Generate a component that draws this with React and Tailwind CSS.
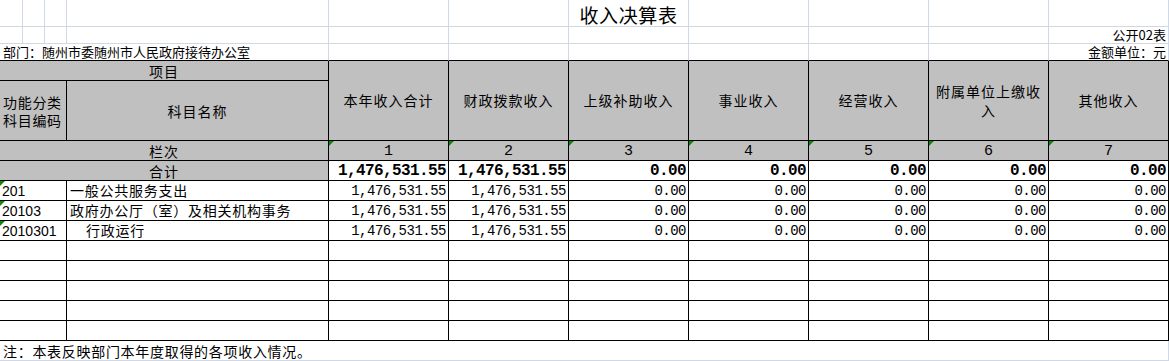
import React from 'react';

const GRID = 'border-[#d0d7e5]';
const CJK = "font-['Noto_Sans_CJK_SC',sans-serif]";
const MIXED = "font-['Liberation_Sans','Noto_Sans_CJK_SC',sans-serif]";
const MONO = "font-['Liberation_Mono',monospace]";

const HEADERS = ['本年收入合计', '财政拨款收入', '上级补助收入', '事业收入', '经营收入', '附属单位上缴收入', '其他收入'];

const TOTAL = ['1,476,531.55', '1,476,531.55', '0.00', '0.00', '0.00', '0.00', '0.00'];

const ROWS = [
  { code: '201', name: '一般公共服务支出', indent: false },
  { code: '20103', name: '政府办公厅（室）及相关机构事务', indent: false },
  { code: '2010301', name: '行政运行', indent: true },
];

// excel-style "number stored as text" marker
function Flag() {
  return (
    <span className="absolute left-0 top-0 h-0 w-0 border-t-[5px] border-r-[5px] border-t-[#0a8a0a] border-r-transparent" />
  );
}

function Cell({ className = '', children }) {
  return (
    <div className={`relative flex items-center border-r border-b ${className}`}>
      {children}
    </div>
  );
}

export default function App() {
  return (
    <div className="w-[1169px] h-[361px] overflow-hidden bg-white text-black">
      <div className="grid grid-cols-[23px_22px_22px_262px_repeat(7,120px)] grid-rows-[27px_17px_17px_20px_60px_20px_20px_20px_20px_20px_20px_20px_20px_20px_20px_20px]">
        {/* row 1: title */}
        <Cell className={GRID} />
        <Cell className={GRID} />
        <Cell className={GRID} />
        <Cell className={GRID} />
        <Cell className={GRID} />
        <Cell className={GRID} />
        <Cell className={`${GRID} justify-center pt-[3px] ${CJK} text-[19px] leading-[22px] tracking-[0.6px]`}>
          收入决算表
        </Cell>
        <Cell className={GRID} />
        <Cell className={GRID} />
        <Cell className={GRID} />
        <Cell className={GRID} />

        {/* row 2 */}
        <Cell className={GRID} />
        <Cell className={GRID} />
        <Cell className={GRID} />
        <Cell className={GRID} />
        <Cell className={GRID} />
        <Cell className={GRID} />
        <Cell className={GRID} />
        <Cell className={GRID} />
        <Cell className={GRID} />
        <Cell className={GRID} />
        <Cell className={`${GRID} justify-end pr-[2px] ${CJK} text-[13px] leading-[14px] whitespace-nowrap`}>公开02表</Cell>

        {/* row 3 */}
        <Cell className={`col-span-4 border-r-[#d0d7e5] border-b-black pl-[3px] ${CJK} text-[13px] leading-[14px] whitespace-nowrap`}>
          部门：随州市委随州市人民政府接待办公室
        </Cell>
        {[0, 1, 2, 3, 4, 5].map(i => (
          <Cell key={i} className="border-r-[#d0d7e5] border-b-black" />
        ))}
        <Cell className={`border-r-[#d0d7e5] border-b-black justify-end pr-[2px] ${CJK} text-[13px] leading-[14px] whitespace-nowrap`}>
          金额单位：元
        </Cell>

        {/* header */}
        <Cell className={`col-span-4 border-black bg-[#c0c0c0] justify-center ${CJK} text-[14px] leading-[18px] tracking-[1px]`}>
          项目
        </Cell>
        {HEADERS.map(h => (
          <Cell key={h} className={`row-span-2 border-black bg-[#c0c0c0] justify-center text-center px-[6px] ${CJK} text-[14px] leading-[19px] tracking-[1px]`}>
            {h}
          </Cell>
        ))}
        <Cell className={`col-span-3 border-black bg-[#c0c0c0] pl-[3px] ${CJK} text-[14px] leading-[18px] tracking-[0.7px]`}>
          功能分类<br />科目编码
        </Cell>
        <Cell className={`border-black bg-[#c0c0c0] justify-center ${CJK} text-[14px] leading-[18px] tracking-[1px]`}>
          科目名称
        </Cell>

        {/* 栏次 */}
        <Cell className={`col-span-4 border-black bg-[#c0c0c0] justify-center ${CJK} text-[14px] leading-[18px] tracking-[1px]`}>
          栏次
        </Cell>
        {HEADERS.map((h, i) => (
          <Cell key={h} className={`border-black bg-[#c0c0c0] justify-center pt-[2px] ${MONO} text-[15px] leading-[18px]`}>
            <Flag />
            {i + 1}
          </Cell>
        ))}

        {/* 合计 */}
        <Cell className={`col-span-4 border-black bg-[#c0c0c0] justify-center ${CJK} text-[14px] leading-[18px] tracking-[1px]`}>
          合计
        </Cell>
        {TOTAL.map((v, i) => (
          <Cell key={i} className={`border-black justify-end pr-[2px] pt-[1px] ${MONO} font-bold text-[16px] leading-[18px] tracking-[-0.6px]`}>
            {v}
          </Cell>
        ))}

        {/* data rows */}
        {ROWS.map(r => (
          <React.Fragment key={r.code}>
            <Cell className={`col-span-3 border-black pl-[2px] ${MIXED} text-[14px] leading-[18px]`}>
              <Flag />
              {r.code}
            </Cell>
            <Cell className={`border-black pb-[1px] ${r.indent ? 'pl-[19px]' : 'pl-[3px]'} ${CJK} text-[14px] leading-[18px] tracking-[0.75px] whitespace-nowrap`}>
              {r.name}
            </Cell>
            {TOTAL.map((v, i) => (
              <Cell key={i} className={`border-black justify-end pr-[2px] pt-[1px] ${MONO} text-[14px] leading-[18px] tracking-[-0.5px]`}>
                {v}
              </Cell>
            ))}
          </React.Fragment>
        ))}

        {/* empty rows */}
        {[0, 1, 2, 3, 4].map(r => (
          <React.Fragment key={r}>
            <Cell className="col-span-3 border-black" />
            <Cell className="border-black" />
            {[0, 1, 2, 3, 4, 5, 6].map(i => (
              <Cell key={i} className="border-black" />
            ))}
          </React.Fragment>
        ))}

        {/* note */}
        <Cell className={`col-span-11 ${GRID} pl-[3px] ${CJK} text-[14px] leading-[18px] tracking-[0.7px] whitespace-nowrap`}>
          注：本表反映部门本年度取得的各项收入情况。
        </Cell>
      </div>
    </div>
  );
}
